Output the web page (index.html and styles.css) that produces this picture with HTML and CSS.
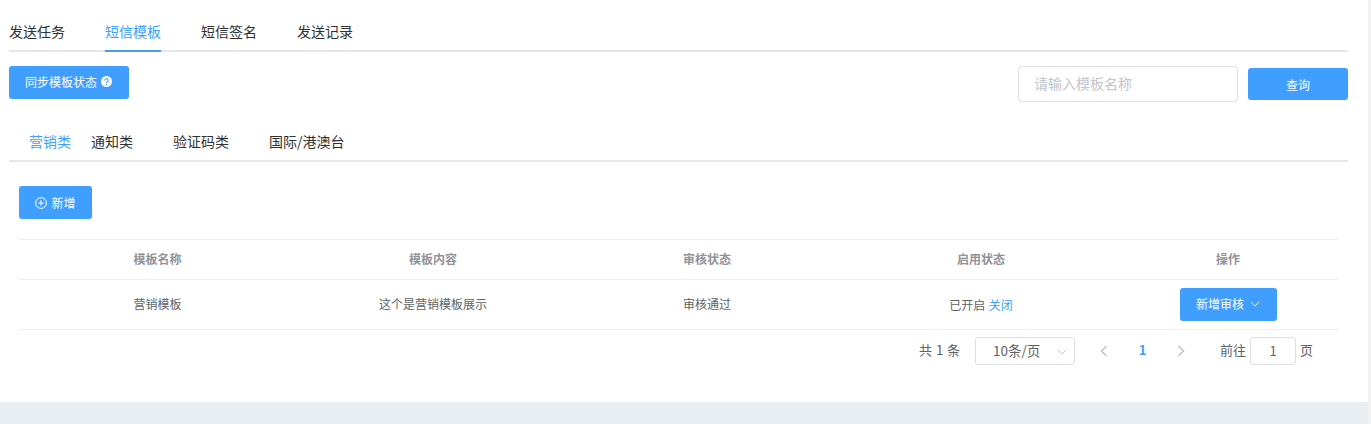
FILE: index.html
```html
<!DOCTYPE html>
<html lang="zh-CN">
<head>
<meta charset="utf-8">
<title>短信模板</title>
<link rel="stylesheet" href="styles.css">
</head>
<body>
<div class="page">
  <main class="panel">
    <nav class="tabs">
      <a class="tab">发送任务</a>
      <a class="tab active">短信模板</a>
      <a class="tab">短信签名</a>
      <a class="tab">发送记录</a>
    </nav>
    <div class="toolbar">
      <button class="btn btn-sync">同步模板状态
        <svg class="help" width="11" height="11" viewBox="0 0 11 11"><circle cx="5.5" cy="5.5" r="5.5" fill="#fff"/><path d="M3.8 4.4a1.7 1.6 0 1 1 2.6 1.3c-.6.4-.9.6-.9 1.2" fill="none" stroke="#409eff" stroke-width="1.1"/><circle cx="5.5" cy="8.4" r=".7" fill="#409eff"/></svg>
      </button>
      <div class="search">
        <input class="search-input" type="text" placeholder="请输入模板名称">
        <button class="btn btn-query">查询</button>
      </div>
    </div>
    <nav class="subtabs">
      <a class="subtab active first">营销类</a>
      <a class="subtab">通知类</a>
      <a class="subtab">验证码类</a>
      <a class="subtab">国际/港澳台</a>
    </nav>
    <section class="content">
      <button class="btn btn-add">
        <svg width="12" height="12" viewBox="0 0 12 12" fill="none" stroke="#fff" stroke-width="1"><circle cx="6" cy="6" r="5.4"/><path d="M6 3.2v5.6M3.2 6h5.6"/></svg>
        新增
      </button>
      <div class="table">
        <div class="row head">
          <div class="cell">模板名称</div><div class="cell">模板内容</div><div class="cell">审核状态</div><div class="cell">启用状态</div><div class="cell">操作</div>
        </div>
        <div class="row body">
          <div class="cell">营销模板</div>
          <div class="cell">这个是营销模板展示</div>
          <div class="cell">审核通过</div>
          <div class="state">已开启 <a class="link">关闭</a></div>
          <div class="action"><button class="btn btn-audit">新增审核
            <svg width="10" height="6" viewBox="0 0 10 6" fill="none" stroke="#fff" stroke-width="1"><path d="M.8.8 5 5l4.2-4.2"/></svg>
          </button></div>
        </div>
      </div>
      <div class="pager">
        <span class="total">共 1 条</span>
        <div class="size">10条/页
          <svg class="size-arrow" width="10" height="6" viewBox="0 0 10 6" fill="none" stroke="#c0c4cc" stroke-width="1"><path d="M.8.8 5 5l4.2-4.2"/></svg>
        </div>
        <svg class="prev" width="8" height="12" viewBox="0 0 8 12" fill="none" stroke="#c0c4cc" stroke-width="1.6"><path d="M6.5 1 1.5 6l5 5"/></svg>
        <span class="num">1</span>
        <svg class="next" width="8" height="12" viewBox="0 0 8 12" fill="none" stroke="#c0c4cc" stroke-width="1.6"><path d="M1.5 1l5 5-5 5"/></svg>
        <span class="goto">前往</span>
        <div class="jump">1</div>
        <span class="unit">页</span>
      </div>
    </section>
  </main>
  <aside class="gutter"></aside>
</div>
</body>
</html>
```

FILE: styles.css
```css
* { box-sizing: border-box; }
html, body { margin: 0; padding: 0; }
body {
  width: 1371px;
  height: 424px;
  overflow: hidden;
  background: #e9eef3;
  font-family: "Noto Sans CJK SC", "Liberation Sans", sans-serif;
  color: #606266;
}
.page { display: flex; width: 1371px; height: 424px; }
.panel {
  flex: none;
  width: 1368px;
  height: 402px;
  background: #fff;
  padding: 0 20px 0 9px;
}
.gutter { width: 3px; background: #f1f1f1; }
.tabs {
  display: flex;
  gap: 40px;
  height: 52px;
  padding-top: 12px;
  border-bottom: 2px solid #e4e7ed;
}
.tab {
  height: 40px;
  line-height: 38px;
  font-size: 14px;
  color: #303133;
}
.tab.active { color: #409eff; border-bottom: 2px solid #409eff; }
.btn {
  border: 0;
  border-radius: 3px;
  background: #409eff;
  color: #fff;
  font-family: inherit;
  font-size: 12px;
  padding: 0;
}
.toolbar {
  display: flex;
  justify-content: space-between;
  align-items: flex-start;
  margin-top: 14px;
  height: 36px;
}
.btn-sync {
  display: flex;
  align-items: center;
  gap: 4px;
  width: 120px;
  height: 33px;
  padding: 0 0 2px 16px;
}
.search { display: flex; align-items: center; gap: 10px; height: 36px; }
.search-input {
  width: 220px;
  height: 36px;
  padding: 0 15px 2px;
  border: 1px solid #dcdfe6;
  border-radius: 4px;
  font-family: inherit;
  font-size: 14px;
  outline: 0;
}
.search-input::placeholder { color: #c0c4cc; opacity: 1; }
.btn-query { width: 100px; height: 32px; }
.subtabs {
  display: flex;
  gap: 40px;
  height: 40px;
  margin-top: 20px;
  padding: 0 20px;
  line-height: 38px;
  font-size: 14px;
  border-bottom: 2px solid #e4e7ed;
  color: #303133;
}
.subtab.active { color: #409eff; }
.subtab.first { margin-right: -20px; }
.content { padding: 24px 10px 0; }
.btn-add {
  display: flex;
  align-items: center;
  justify-content: center;
  gap: 4px;
  width: 73px;
  height: 33px;
}
.table { margin-top: 20px; border-top: 1px solid #ebeef5; }
.row {
  display: grid;
  grid-template-columns: 277px 274px 274px 274px 220px;
  align-items: center;
  text-align: center;
  font-size: 12px;
  border-bottom: 1px solid #ebeef5;
}
.cell { padding-bottom: 2px; }
.head { height: 40px; font-weight: 700; color: #909399; }
.body { height: 50px; }
.state { word-spacing: 1px; }
.link { color: #409eff; }
.btn-audit {
  display: inline-flex;
  align-items: center;
  justify-content: center;
  gap: 6px;
  width: 97px;
  height: 33px;
  padding-bottom: 2px;
  vertical-align: middle;
}
.pager {
  display: flex;
  align-items: center;
  height: 28px;
  margin-top: 7px;
  padding-left: 900px;
  font-size: 13px;
}
.total, .num, .goto, .unit { line-height: 26px; height: 28px; }
.total { width: 41px; white-space: nowrap; word-spacing: 1px; }
.size {
  position: relative;
  width: 100px;
  height: 28px;
  margin-left: 15px;
  padding-left: 17px;
  line-height: 25px;
  font-size: 13.5px;
  border: 1px solid #dcdfe6;
  border-radius: 3px;
}
.size-arrow { position: absolute; right: 7px; top: 11px; }
.prev { margin: 0 0 1px 25px; }
.next { margin-bottom: 1px; }
.num {
  width: 69px;
  text-align: center;
  font-weight: 700;
  color: #409eff;
}
.goto { margin-left: 35px; }
.jump {
  width: 46px;
  height: 28px;
  margin: 0 4px;
  line-height: 25px;
  text-align: center;
  border: 1px solid #dcdfe6;
  border-radius: 3px;
}
```
